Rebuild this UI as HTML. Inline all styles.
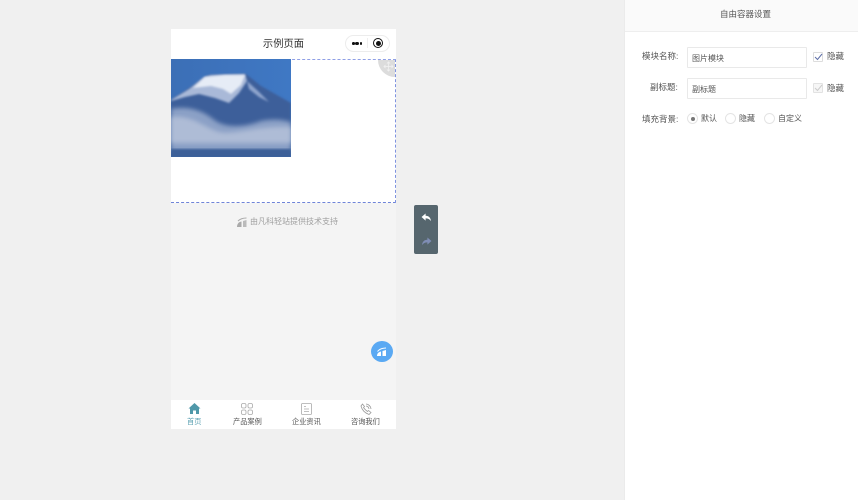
<!DOCTYPE html>
<html><head><meta charset="utf-8">
<style>
html,body{margin:0;padding:0;width:858px;height:500px;overflow:hidden;background:#f0f0f0;font-family:"Liberation Sans","Noto Sans CJK SC",sans-serif;}
#w{position:absolute;left:0;top:0;width:858px;height:500px;filter:blur(.3px);}
.a{position:absolute;white-space:nowrap;}
.inp{position:absolute;left:687px;width:118px;height:19px;border:1px solid #e9e9e9;background:#fff;font-size:8px;line-height:21px;color:#555;text-indent:4px;border-radius:1px;}
.lbl{position:absolute;font-size:8.500px;color:#555;line-height:12px;white-space:nowrap;}
.rad{position:absolute;width:9px;height:9px;border:1px solid #e4e4e4;border-radius:50%;background:#fff;top:113px;}
.tab{position:absolute;top:417px;font-size:7.200px;color:#555;line-height:10px;white-space:nowrap;}
</style></head><body><div id="w">
<div class="a" style="left:171px;top:29px;width:225px;height:400px;background:#f4f4f4;"></div>
<div class="a" style="left:171px;top:29px;width:225px;height:30px;background:#fff;"></div>
<div class="a" style="left:171px;top:37px;width:225px;text-align:center;font-size:10.300px;line-height:15px;color:#333;">示例页面</div>
<div class="a" style="left:345px;top:35px;width:43px;height:15px;border:1px solid #ececec;border-radius:9px;background:#fff;"></div>
<div class="a" style="left:352px;top:42px;width:2.500px;height:2.500px;border-radius:50%;background:#111;"></div>
<div class="a" style="left:355px;top:41.500px;width:3.500px;height:3.500px;border-radius:50%;background:#111;"></div>
<div class="a" style="left:359.500px;top:42px;width:2.500px;height:2.500px;border-radius:50%;background:#111;"></div>
<div class="a" style="left:367px;top:38px;width:1px;height:10px;background:#eee;"></div>
<div class="a" style="left:373px;top:38px;width:8px;height:8px;border:1.200px solid #111;border-radius:50%;"></div>
<div class="a" style="left:375.500px;top:40.500px;width:5px;height:5px;border-radius:50%;background:#111;"></div>

<div class="a" style="left:171px;top:59px;width:225px;height:144px;background:#fff;border-top:1px dashed #8f9fe6;border-bottom:1px dashed #6f84d8;border-right:1px dashed #7f93e0;box-sizing:border-box;"></div>
<svg class="a" style="left:171px;top:59px;" width="120" height="98" viewBox="0 0 120 98">
<defs><linearGradient id="s" x1="0" y1="0" x2="1" y2="0"><stop offset="0" stop-color="#3c6fb6"/><stop offset="1" stop-color="#3f78c4"/></linearGradient>
<filter id="b" x="-10%" y="-10%" width="120%" height="120%"><feGaussianBlur stdDeviation="2.200"/></filter><filter id="b2"><feGaussianBlur stdDeviation="1"/></filter></defs>
<rect width="120" height="98" fill="url(#s)"/>
<path d="M0 41L14 32L33 19L38 16L75 15L90 27L120 44V98H0Z" fill="#3c5f9a" filter="url(#b2)"/>
<path d="M0 41L18 30L33 18L40 16L74 15L76 22L68 34L58 44L44 39L28 35L14 38L0 42Z" fill="#a9b9d8" filter="url(#b2)"/>
<path d="M22 29L34 18L54 16L74 16L70 26L60 35L52 30L40 27Z" fill="#e6ecf6" filter="url(#b2)"/>
<path d="M76 22L88 33L98 43L88 38L78 30Z" fill="#8fa5cd" filter="url(#b2)"/>
<path d="M0 50C14 47 30 50 42 60C54 70 74 68 90 62C100 60 110 60 120 63V92H0Z" fill="#8ba0c6" filter="url(#b)"/>
<path d="M0 58C20 56 30 66 45 72C60 78 85 66 120 68V84H0Z" fill="#aebcd6" filter="url(#b)"/>
<rect y="90" width="120" height="8" fill="#3d6198" filter="url(#b2)"/>
</svg>
<div class="a" style="left:378px;top:60px;width:17px;height:17px;background:#dcdcdc;border-bottom-left-radius:17px;"></div>
<svg class="a" style="left:383px;top:61px;" width="11" height="11" viewBox="0 0 11 11"><path d="M5.500 1V10M1 5.500H10" stroke="#f2f2f2" stroke-width=".7"/><path d="M4 2.500L5.500 1L7 2.500M4 8.500L5.500 10L7 8.500M2.500 4L1 5.500L2.500 7M8.500 4L10 5.500L8.500 7" fill="none" stroke="#f2f2f2" stroke-width=".8"/></svg>

<svg class="a" style="left:236px;top:216px;" width="12" height="12" viewBox="0 0 12 12"><path d="M1 11C1 8 2.500 6 5.500 5.500L5.500 11Z" fill="#aaa"/><path d="M7 11V5L10.500 4V11Z" fill="#bbb"/><path d="M2 5C4 3 7 2 10.500 2" fill="none" stroke="#aaa"/></svg>
<div class="a" style="left:250px;top:216px;font-size:8px;line-height:11px;color:#a0a0a0;">由凡科轻站提供技术支持</div>

<div class="a" style="left:371px;top:341px;width:22px;height:21px;border-radius:50%;background:#5aa9f3;"></div>
<svg class="a" style="left:375px;top:345px;" width="14" height="14" viewBox="0 0 14 14"><path d="M2 11C2 8.500 3.500 7 6 6.500L6 11Z" fill="#fff"/><path d="M7.500 11V6L11 5V11Z" fill="#fff"/><path d="M2.500 6.500C4.500 4 7.500 3 11 3" stroke="#fff" fill="none"/></svg>

<div class="a" style="left:171px;top:400px;width:225px;height:29px;background:#fff;"></div>
<svg class="a" style="left:188px;top:402px;" width="13" height="13" viewBox="0 0 13 13"><path d="M6.500 1L0.500 6.500L2 6.500V12H5V8.500H8V12H11V6.500H12.500Z" fill="#4f98a9"/></svg>
<div class="tab" style="left:187px;color:#5ba0b2;">首页</div>
<svg class="a" style="left:241px;top:403px;" width="12" height="12" viewBox="0 0 12 12" fill="none" stroke="#aaa" stroke-width=".8"><rect x=".5" y=".5" width="4.500" height="4.500" rx="1.500"/><rect x="7" y=".5" width="4.500" height="4.500" rx="1.500"/><rect x=".5" y="7" width="4.500" height="4.500" rx="1.500"/><rect x="7" y="7" width="4.500" height="4.500" rx="1.500"/></svg>
<div class="tab" style="left:233px;">产品案例</div>
<svg class="a" style="left:301px;top:403px;" width="11" height="12" viewBox="0 0 11 12" fill="none" stroke="#aaa" stroke-width=".8"><rect x=".5" y=".5" width="10" height="11" rx="1"/><path d="M3 3.500H5M3 6H8M3 8.500H8"/></svg>
<div class="tab" style="left:292px;">企业资讯</div>
<svg class="a" style="left:360px;top:403px;" width="12" height="12" viewBox="0 0 12 12" fill="none" stroke="#999" stroke-width=".8"><path d="M1 3C2 7 5 10 9 11.500L11 9.500L8.500 7.500L7.500 8.500C6 7.500 4.500 6 3.500 4.500L4.500 3.500L2.500 1Z"/><path d="M6 1C8.500 1 11 3.500 11 6M6 3C7.500 3 9 4.500 9 6"/></svg>
<div class="tab" style="left:351px;">咨询我们</div>

<div class="a" style="left:414px;top:205px;width:24px;height:49px;background:#56666e;border-radius:2px;"></div>
<svg class="a" style="left:420.500px;top:212.500px;" width="11" height="9" viewBox="0 0 12 10"><path d="M0.500 4.500L5 0.500V3C8.500 3 10.500 5 11 9C9.500 7 7.500 6 5 6V8.500Z" fill="#fff"/></svg>
<svg class="a" style="left:420.500px;top:236.500px;" width="11" height="9" viewBox="0 0 12 10"><path d="M11.500 4.500L7 0.500V3C3.500 3 1.500 5 1 9C2.500 7 4.500 6 7 6V8.500Z" fill="#7f8db5"/></svg>

<div class="a" style="left:624px;top:0;width:234px;height:500px;background:#fff;border-left:1px solid #ebebeb;box-sizing:border-box;"></div>
<div class="a" style="left:625px;top:0;width:233px;height:31px;background:#fafafa;"></div>
<div class="a" style="left:625px;top:31px;width:233px;height:1px;background:#eeeeee;"></div>
<div class="a" style="left:629px;top:0;width:233px;height:32px;text-align:center;font-size:8.500px;line-height:29px;color:#555;">自由容器设置</div>

<div class="lbl" style="left:642px;top:50px;">模块名称:</div>
<div class="inp" style="top:47px;">图片模块</div>
<div class="a" style="left:813px;top:52px;width:8px;height:8px;border:1px solid #ddd;background:#fff;border-radius:1px;"></div>
<svg class="a" style="left:814px;top:53px;" width="9" height="8" viewBox="0 0 9 8"><path d="M1 4L3.500 6.500L8 1" fill="none" stroke="#5f6fa8" stroke-width="1"/></svg>
<div class="lbl" style="left:827px;top:50px;">隐藏</div>

<div class="lbl" style="left:650px;top:81px;">副标题:</div>
<div class="inp" style="top:78px;">副标题</div>
<div class="a" style="left:813px;top:83px;width:8px;height:8px;border:1px solid #e2e2e2;background:#f6f6f6;border-radius:1px;"></div>
<svg class="a" style="left:814px;top:84px;" width="9" height="8" viewBox="0 0 9 8"><path d="M1 4L3.500 6.500L8 1" fill="none" stroke="#ccc" stroke-width="1"/></svg>
<div class="lbl" style="left:827px;top:82px;">隐藏</div>

<div class="lbl" style="left:642px;top:113px;">填充背景:</div>
<div class="rad" style="left:687px;"></div>
<div class="a" style="left:690.500px;top:116.500px;width:4px;height:4px;border-radius:50%;background:#777;"></div>
<div class="lbl" style="left:701px;top:113px;font-size:8px;">默认</div>
<div class="rad" style="left:725px;"></div>
<div class="lbl" style="left:739px;top:113px;font-size:8px;">隐藏</div>
<div class="rad" style="left:764px;"></div>
<div class="lbl" style="left:778px;top:113px;font-size:8px;">自定义</div>
</div></body></html>
